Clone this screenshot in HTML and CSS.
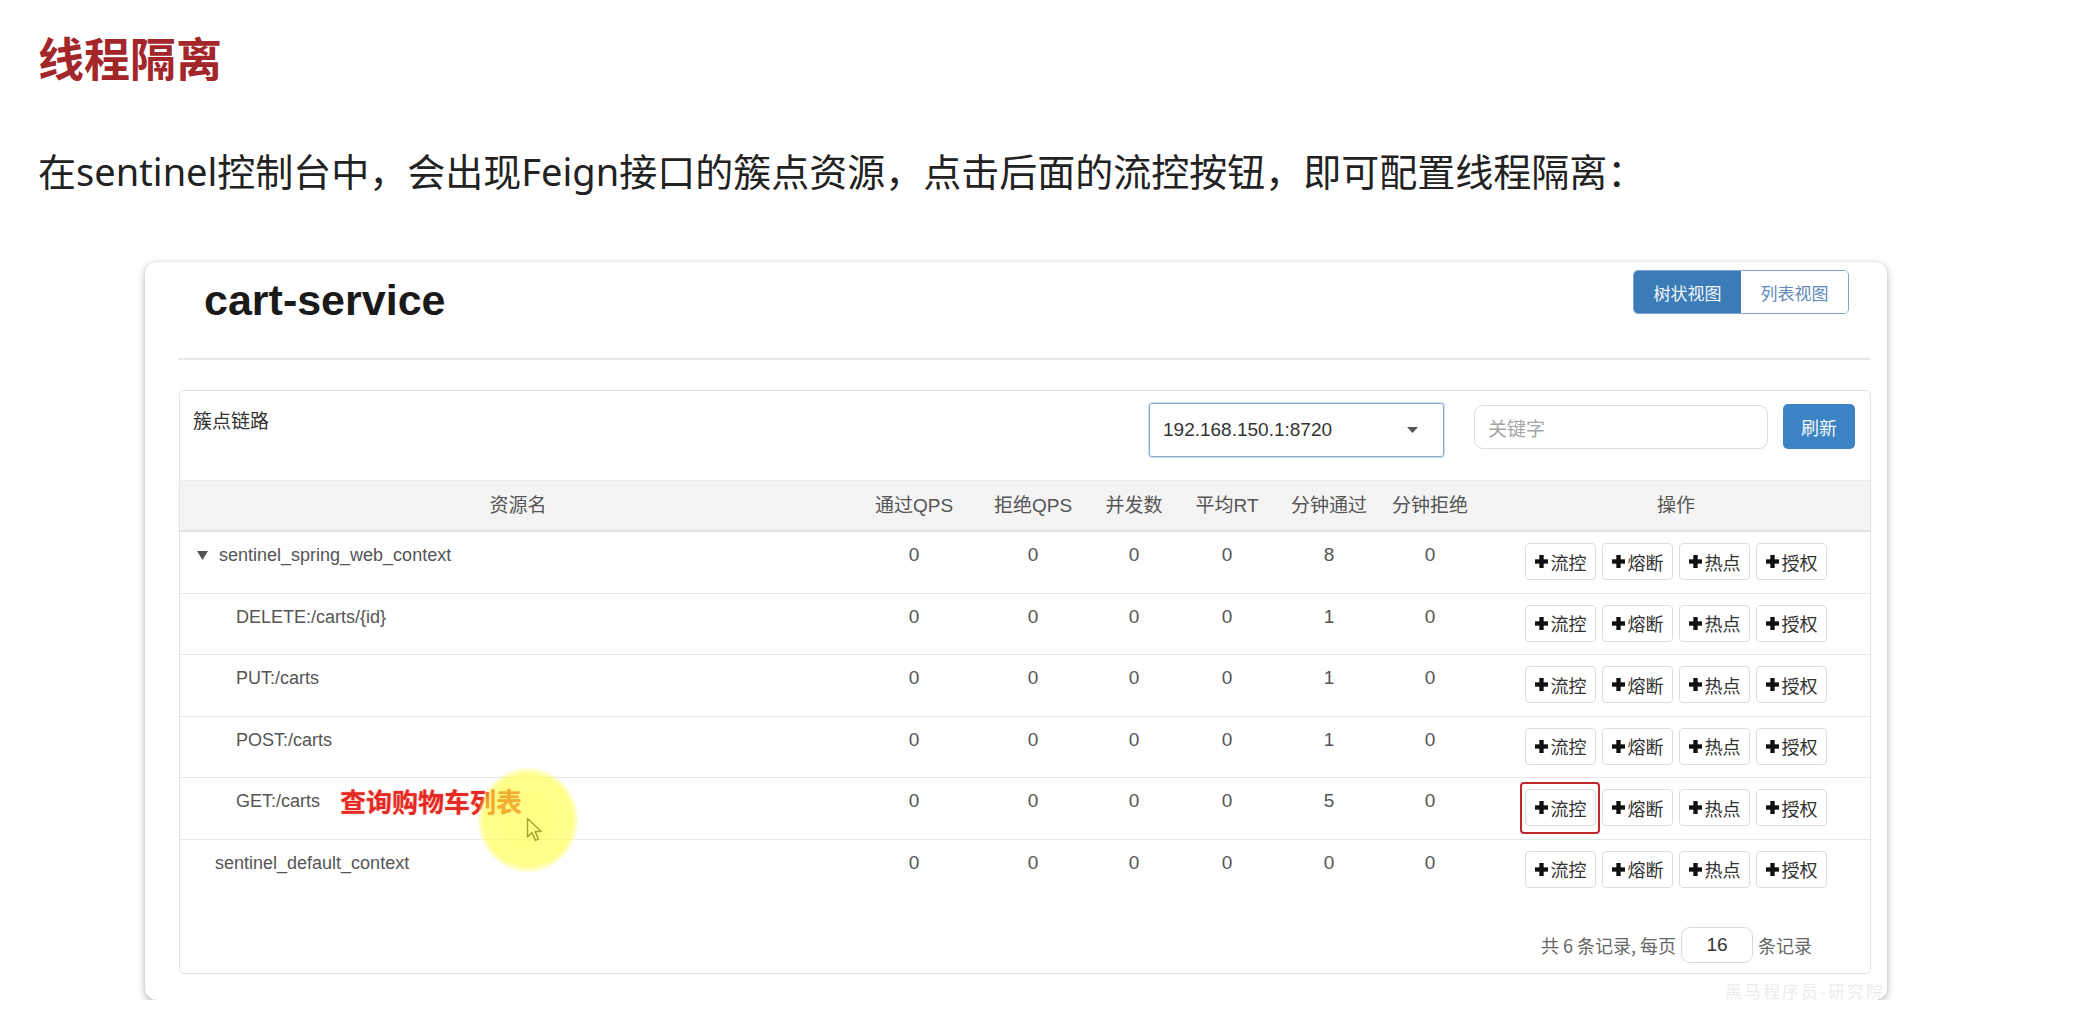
FILE: index.html
```html
<!DOCTYPE html>
<html lang="zh-CN">
<head>
<meta charset="utf-8">
<title>线程隔离</title>
<link rel="stylesheet" href="styles.css">
</head>
<body>
<div class="page">
  <h1 class="title">线程隔离</h1>
  <p class="intro">在sentinel控制台中，会出现Feign接口的簇点资源，点击后面的流控按钮，即可配置线程隔离：</p>

  <div class="card">
    <div class="card-head">
      <h2 class="app-name">cart-service</h2>
      <div class="view-switch">
        <span class="vs-btn active">树状视图</span><span class="vs-btn">列表视图</span>
      </div>
    </div>
    <div class="divider"></div>

    <div class="panel">
      <div class="toolbar">
        <span class="tb-label">簇点链路</span>
        <div class="select">
          <span>192.168.150.1:8720</span>
          <svg class="caret" width="11" height="6" viewBox="0 0 11 6"><polygon points="0,0 11,0 5.5,6" fill="#555"/></svg>
        </div>
        <div class="search">关键字</div>
        <span class="refresh">刷新</span>
      </div>

      <div class="table">
        <div class="row head">
          <div class="cell">资源名</div>
          <div class="cell">通过QPS</div>
          <div class="cell">拒绝QPS</div>
          <div class="cell">并发数</div>
          <div class="cell">平均RT</div>
          <div class="cell">分钟通过</div>
          <div class="cell">分钟拒绝</div>
          <div class="cell">操作</div>
        </div>

        <div class="row">
          <div class="cell name lvl0"><svg class="tri" width="11" height="9" viewBox="0 0 11 9"><polygon points="0,0 11,0 5.5,9" fill="#555"/></svg>sentinel_spring_web_context</div>
          <div class="cell num">0</div><div class="cell num">0</div><div class="cell num">0</div><div class="cell num">0</div><div class="cell num">8</div><div class="cell num">0</div>
          <div class="cell ops">
            <span class="op"><svg class="plus" viewBox="0 0 12 12"><rect x="4" y="0" width="4" height="12"/><rect x="0" y="4" width="12" height="4"/></svg>流控</span>
            <span class="op"><svg class="plus" viewBox="0 0 12 12"><rect x="4" y="0" width="4" height="12"/><rect x="0" y="4" width="12" height="4"/></svg>熔断</span>
            <span class="op"><svg class="plus" viewBox="0 0 12 12"><rect x="4" y="0" width="4" height="12"/><rect x="0" y="4" width="12" height="4"/></svg>热点</span>
            <span class="op"><svg class="plus" viewBox="0 0 12 12"><rect x="4" y="0" width="4" height="12"/><rect x="0" y="4" width="12" height="4"/></svg>授权</span>
          </div>
        </div>

        <div class="row">
          <div class="cell name lvl1">DELETE:/carts/{id}</div>
          <div class="cell num">0</div><div class="cell num">0</div><div class="cell num">0</div><div class="cell num">0</div><div class="cell num">1</div><div class="cell num">0</div>
          <div class="cell ops">
            <span class="op"><svg class="plus" viewBox="0 0 12 12"><rect x="4" y="0" width="4" height="12"/><rect x="0" y="4" width="12" height="4"/></svg>流控</span>
            <span class="op"><svg class="plus" viewBox="0 0 12 12"><rect x="4" y="0" width="4" height="12"/><rect x="0" y="4" width="12" height="4"/></svg>熔断</span>
            <span class="op"><svg class="plus" viewBox="0 0 12 12"><rect x="4" y="0" width="4" height="12"/><rect x="0" y="4" width="12" height="4"/></svg>热点</span>
            <span class="op"><svg class="plus" viewBox="0 0 12 12"><rect x="4" y="0" width="4" height="12"/><rect x="0" y="4" width="12" height="4"/></svg>授权</span>
          </div>
        </div>

        <div class="row">
          <div class="cell name lvl1">PUT:/carts</div>
          <div class="cell num">0</div><div class="cell num">0</div><div class="cell num">0</div><div class="cell num">0</div><div class="cell num">1</div><div class="cell num">0</div>
          <div class="cell ops">
            <span class="op"><svg class="plus" viewBox="0 0 12 12"><rect x="4" y="0" width="4" height="12"/><rect x="0" y="4" width="12" height="4"/></svg>流控</span>
            <span class="op"><svg class="plus" viewBox="0 0 12 12"><rect x="4" y="0" width="4" height="12"/><rect x="0" y="4" width="12" height="4"/></svg>熔断</span>
            <span class="op"><svg class="plus" viewBox="0 0 12 12"><rect x="4" y="0" width="4" height="12"/><rect x="0" y="4" width="12" height="4"/></svg>热点</span>
            <span class="op"><svg class="plus" viewBox="0 0 12 12"><rect x="4" y="0" width="4" height="12"/><rect x="0" y="4" width="12" height="4"/></svg>授权</span>
          </div>
        </div>

        <div class="row">
          <div class="cell name lvl1">POST:/carts</div>
          <div class="cell num">0</div><div class="cell num">0</div><div class="cell num">0</div><div class="cell num">0</div><div class="cell num">1</div><div class="cell num">0</div>
          <div class="cell ops">
            <span class="op"><svg class="plus" viewBox="0 0 12 12"><rect x="4" y="0" width="4" height="12"/><rect x="0" y="4" width="12" height="4"/></svg>流控</span>
            <span class="op"><svg class="plus" viewBox="0 0 12 12"><rect x="4" y="0" width="4" height="12"/><rect x="0" y="4" width="12" height="4"/></svg>熔断</span>
            <span class="op"><svg class="plus" viewBox="0 0 12 12"><rect x="4" y="0" width="4" height="12"/><rect x="0" y="4" width="12" height="4"/></svg>热点</span>
            <span class="op"><svg class="plus" viewBox="0 0 12 12"><rect x="4" y="0" width="4" height="12"/><rect x="0" y="4" width="12" height="4"/></svg>授权</span>
          </div>
        </div>

        <div class="row">
          <div class="cell name lvl1">GET:/carts<span class="note">查询购物车列表</span>
            <svg class="cursor" width="18" height="26" viewBox="0 0 18 26"><path d="M1.5 1.5 L1.5 20 L6 15.6 L9.4 23.4 L12.4 22.1 L9.1 14.5 L15.2 14.5 Z" fill="#ffffff" stroke="#1a1a1a" stroke-width="1.5" stroke-linejoin="round"/></svg>
            <span class="spot"></span>
          </div>
          <div class="cell num">0</div><div class="cell num">0</div><div class="cell num">0</div><div class="cell num">0</div><div class="cell num">5</div><div class="cell num">0</div>
          <div class="cell ops">
            <span class="op hl"><svg class="plus" viewBox="0 0 12 12"><rect x="4" y="0" width="4" height="12"/><rect x="0" y="4" width="12" height="4"/></svg>流控</span>
            <span class="op"><svg class="plus" viewBox="0 0 12 12"><rect x="4" y="0" width="4" height="12"/><rect x="0" y="4" width="12" height="4"/></svg>熔断</span>
            <span class="op"><svg class="plus" viewBox="0 0 12 12"><rect x="4" y="0" width="4" height="12"/><rect x="0" y="4" width="12" height="4"/></svg>热点</span>
            <span class="op"><svg class="plus" viewBox="0 0 12 12"><rect x="4" y="0" width="4" height="12"/><rect x="0" y="4" width="12" height="4"/></svg>授权</span>
          </div>
        </div>

        <div class="row last">
          <div class="cell name lvl-root">sentinel_default_context</div>
          <div class="cell num">0</div><div class="cell num">0</div><div class="cell num">0</div><div class="cell num">0</div><div class="cell num">0</div><div class="cell num">0</div>
          <div class="cell ops">
            <span class="op"><svg class="plus" viewBox="0 0 12 12"><rect x="4" y="0" width="4" height="12"/><rect x="0" y="4" width="12" height="4"/></svg>流控</span>
            <span class="op"><svg class="plus" viewBox="0 0 12 12"><rect x="4" y="0" width="4" height="12"/><rect x="0" y="4" width="12" height="4"/></svg>熔断</span>
            <span class="op"><svg class="plus" viewBox="0 0 12 12"><rect x="4" y="0" width="4" height="12"/><rect x="0" y="4" width="12" height="4"/></svg>热点</span>
            <span class="op"><svg class="plus" viewBox="0 0 12 12"><rect x="4" y="0" width="4" height="12"/><rect x="0" y="4" width="12" height="4"/></svg>授权</span>
          </div>
        </div>
      </div>

      <div class="pager">
        <span>共 6 条记录, 每页</span>
        <span class="page-size">16</span>
        <span>条记录</span>
      </div>
    </div>

    <div class="watermark">黑马程序员-研究院</div>
  </div>
</div>
</body>
</html>
```

FILE: styles.css
```css
* { box-sizing: border-box; }

html, body {
  margin: 0;
  padding: 0;
  background: #ffffff;
}

.page {
  padding: 33px 0 0 38px;
  font-family: "Noto Sans", "Noto Sans CJK SC", sans-serif;
}

.title {
  margin: 0;
  font-family: "Noto Sans CJK SC", sans-serif;
  font-size: 46px;
  line-height: 46px;
  font-weight: 700;
  color: #a3262a;
}

.intro {
  margin: 73px 0 0 0;
  font-family: "Noto Sans", "Noto Sans CJK SC", sans-serif;
  font-size: 38px;
  line-height: 38px;
  color: #222;
}

.card {
  position: relative;
  width: 1742px;
  margin: 72px 0 0 107px;
  padding: 0 16px 26px 34px;
  background: #fff;
  border-radius: 12px;
  box-shadow: 0 3px 9px rgba(0, 0, 0, 0.28), 0 0 3px rgba(0, 0, 0, 0.08);
  font-family: "Liberation Sans", "Noto Sans CJK SC", sans-serif;
}

.card-head {
  display: flex;
  justify-content: space-between;
  align-items: flex-start;
  height: 96px;
}

.app-name {
  margin: 13px 0 0 25px;
  font-family: "Liberation Sans", sans-serif;
  font-size: 43px;
  line-height: 50px;
  font-weight: 700;
  color: #1a1a1a;
}

.view-switch {
  display: flex;
  margin: 8px 22px 0 0;
  height: 44px;
  border: 1px solid #7ea6cd;
  border-radius: 5px;
  overflow: hidden;
}

.vs-btn {
  display: flex;
  align-items: center;
  justify-content: center;
  width: 107px;
  height: 100%;
  font-size: 17px;
  font-family: "Noto Sans CJK SC", sans-serif;
  color: #5f8ab8;
  background: #fff;
}

.vs-btn.active {
  background: #3a7bb8;
  color: #f3f7fb;
}

.divider {
  height: 2px;
  background: #e8e8e8;
  margin-left: -1px;
}

.panel {
  margin-top: 30px;
  border: 1px solid #e2e2e2;
  border-radius: 5px;
}

.toolbar {
  display: flex;
  align-items: flex-start;
  height: 89px;
  padding: 12px 15px 0 13px;
}

.tb-label {
  margin-top: 6px;
  font-family: "Noto Sans CJK SC", sans-serif;
  font-size: 19px;
  line-height: 22px;
  color: #333;
}

.select {
  display: flex;
  align-items: center;
  justify-content: space-between;
  margin-left: auto;
  width: 295px;
  height: 54px;
  padding: 0 25px 0 13px;
  border: 1px solid #86abcc;
  border-radius: 3px;
  box-shadow: 0 0 0 1px rgba(120, 160, 200, 0.35);
  font-size: 19px;
  color: #333;
}

.search {
  display: flex;
  align-items: center;
  margin: 2px 0 0 30px;
  width: 294px;
  height: 44px;
  padding-left: 13px;
  border: 1px solid #dcdcdc;
  border-radius: 9px;
  font-family: "Noto Sans CJK SC", sans-serif;
  font-size: 19px;
  color: #a6a6a6;
}

.refresh {
  display: flex;
  align-items: center;
  justify-content: center;
  margin: 1px 0 0 15px;
  width: 72px;
  height: 45px;
  border-radius: 5px;
  background: #3b83c4;
  color: #f3f8fc;
  font-family: "Noto Sans CJK SC", sans-serif;
  font-size: 18px;
}

.row {
  display: grid;
  grid-template-columns: 676px 116px 122px 80px 106px 98px 104px 1fr;
  height: 61.5px;
  border-bottom: 1px solid #e8e8e8;
}

.row.last { border-bottom: none; }

.row.head {
  height: 52px;
  align-items: center;
  background: #f4f4f4;
  border-top: 1px solid #ebebeb;
  border-bottom: 2px solid #e2e2e2;
}

.row.head .cell {
  padding: 0;
  text-align: center;
  font-size: 19px;
  color: #555;
}

.cell {
  padding-top: 12px;
  font-size: 18px;
  line-height: 22px;
  color: #555;
}

.num { text-align: center; font-size: 19px; }

.name {
  position: relative;
  display: flex;
  align-items: flex-start;
  white-space: nowrap;
}

.lvl0 { padding-left: 17px; }
.lvl1 { padding-left: 56px; }
.lvl-root { padding-left: 35px; }

.tri {
  margin: 7px 11px 0 0;
  flex: none;
}

.note {
  margin: -2px 0 0 20px;
  font-family: "Noto Sans CJK SC", sans-serif;
  font-size: 26px;
  line-height: 26px;
  font-weight: 700;
  color: #e42a22;
  text-shadow: 0 0 2px rgba(255, 160, 160, 0.9);
}

.cursor {
  position: absolute;
  left: 346px;
  top: 39px;
}

.spot {
  position: absolute;
  left: 298px;
  top: -10px;
  width: 100px;
  height: 104px;
  border-radius: 50%;
  background: radial-gradient(ellipse at center, rgba(255, 255, 60, 0.62) 0%, rgba(255, 255, 60, 0.6) 62%, rgba(255, 255, 90, 0.25) 70%, rgba(255, 255, 120, 0) 72%);
  pointer-events: none;
}

.ops {
  display: flex;
  justify-content: center;
  gap: 6px;
  padding-top: 11px;
}

.op {
  position: relative;
  display: flex;
  align-items: center;
  justify-content: center;
  width: 71px;
  height: 37px;
  border: 1px solid #dddddd;
  border-radius: 4px;
  background: #fff;
  font-family: "Noto Sans CJK SC", sans-serif;
  font-size: 18px;
  color: #333;
}

.plus {
  width: 13px;
  height: 13px;
  margin-right: 3px;
  fill: #111;
}

.op.hl::after {
  content: "";
  position: absolute;
  left: -6px;
  right: -5px;
  top: -8px;
  bottom: -9px;
  border: 2px solid #c2272d;
  border-radius: 4px;
}

.pager {
  display: flex;
  justify-content: flex-end;
  align-items: center;
  gap: 5px;
  height: 72px;
  padding: 15px 58px 0 0;
  font-family: "Noto Sans CJK SC", sans-serif;
  font-size: 18px;
  color: #666;
}

.page-size {
  display: flex;
  align-items: center;
  justify-content: center;
  width: 72px;
  height: 36px;
  border: 1px solid #d8d8d8;
  border-radius: 9px;
  font-family: "Liberation Sans", sans-serif;
  font-size: 19px;
  color: #333;
}

.watermark {
  position: absolute;
  right: 2px;
  bottom: -3px;
  font-family: "Noto Sans CJK SC", serif;
  font-size: 17px;
  letter-spacing: 2px;
  color: #ececec;
}
```
